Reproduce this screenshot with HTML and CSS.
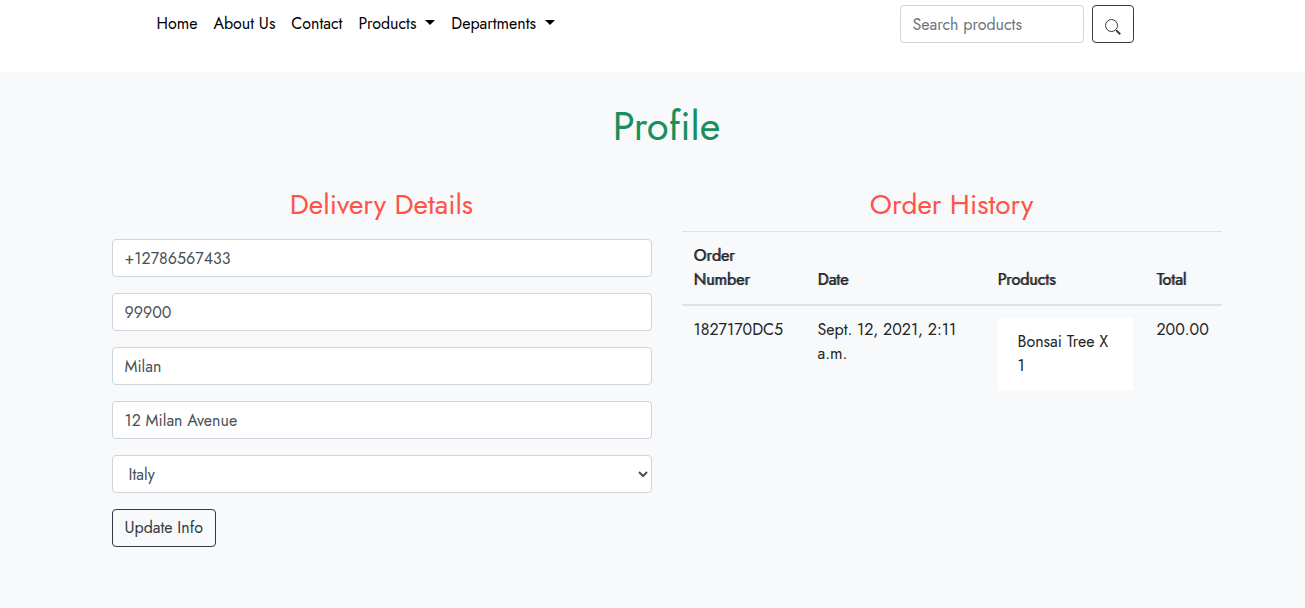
FILE: index.html
```html
<!DOCTYPE html>
<html lang="en">
<head>
<meta charset="utf-8">
<meta name="viewport" content="width=device-width, initial-scale=1">
<title>Profile</title>
<link rel="stylesheet" href="styles.css">
</head>
<body>
<header class="site-header">
  <nav class="navbar" aria-label="Main">
    <ul class="nav-list">
      <li><a class="nav-link" href="#">Home</a></li>
      <li><a class="nav-link" href="#">About Us</a></li>
      <li><a class="nav-link" href="#">Contact</a></li>
      <li><a class="nav-link dropdown-toggle" href="#">Products</a></li>
      <li><a class="nav-link dropdown-toggle" href="#">Departments</a></li>
    </ul>
    <form class="search-form">
      <input class="form-control search-input" type="search" placeholder="Search products" aria-label="Search products">
      <button class="btn search-btn" type="submit" aria-label="Search">
        <svg class="search-icon" viewBox="0 0 16 16" width="16" height="16" fill="none" stroke="currentColor" aria-hidden="true">
          <circle cx="6.5" cy="6.5" r="6"/>
          <path d="M10.8 10.8 12 12" stroke-width="1"/>
          <path d="M11.6 11.6 15.2 15.2" stroke-width="2"/>
        </svg>
      </button>
    </form>
  </nav>
</header>
<main class="profile">
  <h1 class="page-title">Profile</h1>
  <div class="columns">
    <section class="column">
      <h2 class="section-title">Delivery Details</h2>
      <form class="details-form">
        <input class="form-control" type="text" aria-label="Phone number" value="+12786567433">
        <input class="form-control" type="text" aria-label="Postal code" value="99900">
        <input class="form-control" type="text" aria-label="Town or city" value="Milan">
        <input class="form-control" type="text" aria-label="Street address" value="12 Milan Avenue">
        <select class="form-control" aria-label="Country"><option>Italy</option></select>
        <button class="btn" type="submit">Update Info</button>
      </form>
    </section>
    <section class="column">
      <h2 class="section-title">Order History</h2>
      <table class="orders">
        <colgroup><col class="col-number"><col class="col-date"><col class="col-products"><col></colgroup>
        <thead>
          <tr><th scope="col">Order<br>Number</th><th scope="col">Date</th><th scope="col">Products</th><th scope="col">Total</th></tr>
        </thead>
        <tbody>
          <tr>
            <td>1827170DC5</td>
            <td>Sept. 12, 2021, 2:11 a.m.</td>
            <td><ul class="product-list"><li>Bonsai Tree X 1</li></ul></td>
            <td>200.00</td>
          </tr>
        </tbody>
      </table>
    </section>
  </div>
</main>
</body>
</html>
```
FILE: styles.css
```css
*, *::before, *::after { box-sizing: border-box; }

body {
  margin: 0;
  background: #f8f9fb;
  color: #212529;
  font: 400 16px/24px Jost, Lato, sans-serif;
}

input, select, button { font: inherit; }

.site-header {
  min-height: 72px;
  padding-top: 4px;
  background: #fff;
}

.navbar {
  display: flex;
  align-items: center;
  justify-content: space-between;
  max-width: 1140px;
  margin: 0 auto;
  padding: 0 89px 0 66px;
}

.nav-list {
  display: flex;
  margin: 0;
  padding: 0;
  list-style: none;
}

.nav-link {
  display: block;
  padding: 8px;
  color: #000;
  text-decoration: none;
  white-space: nowrap;
}

.dropdown-toggle::after {
  content: "";
  display: inline-block;
  margin-left: 9px;
  vertical-align: 4px;
  border-top: 5px solid;
  border-right: 5px solid transparent;
  border-left: 5px solid transparent;
}

.search-form {
  display: flex;
  gap: 8px;
}

.form-control {
  display: block;
  width: 100%;
  height: 38px;
  padding: 6px 12px;
  border: 1px solid #ced4da;
  border-radius: 4px;
  background: #fff;
  color: #495057;
}

.form-control::placeholder { color: #6c757d; opacity: 1; }

.search-input { width: 184px; }

.btn {
  height: 38px;
  padding: 6px 12px;
  border: 1px solid #343a40;
  border-radius: 4px;
  background: transparent;
  color: #343a40;
}

.search-btn {
  display: flex;
  padding-top: 13px;
}

.search-icon { display: block; }

.profile {
  max-width: 1170px;
  margin: 0 auto;
  padding: 30px 16px 60px 44px;
}

.page-title {
  margin: 0 0 32px;
  color: #198f5b;
  font-size: 40px;
  font-weight: 400;
  line-height: 48px;
  text-align: center;
}

.columns {
  display: grid;
  grid-template-columns: repeat(2, minmax(0, 1fr));
  gap: 30px;
}

.section-title {
  margin: 0;
  padding: 6px 0 10px;
  color: #ff5349;
  font-size: 28px;
  font-weight: 400;
  line-height: 33px;
  text-align: center;
}

.details-form {
  display: flex;
  flex-direction: column;
  align-items: flex-start;
  gap: 16px;
  padding-top: 8px;
}

.orders {
  width: 100%;
  table-layout: fixed;
  border-collapse: collapse;
}

.col-number { width: 124px; }
.col-date { width: 180px; }
.col-products { width: 159px; }

.orders th, .orders td {
  padding: 12px;
  border-top: 1px solid #dee2e6;
  text-align: left;
  vertical-align: top;
}

.orders th {
  border-bottom: 2px solid #dee2e6;
  font-weight: 400;
  text-shadow: 1px 0 rgb(33 37 41 / 70%);
  vertical-align: bottom;
}

.product-list {
  margin: 0;
  padding: 12px 20px;
  background: #fff;
  list-style: none;
}

@media (max-width: 800px) {
  .navbar { flex-wrap: wrap; padding: 0 15px; }
  .nav-list { flex-wrap: wrap; }
  .profile { padding-left: 16px; }
  .columns { grid-template-columns: minmax(0, 1fr); }
}
```
